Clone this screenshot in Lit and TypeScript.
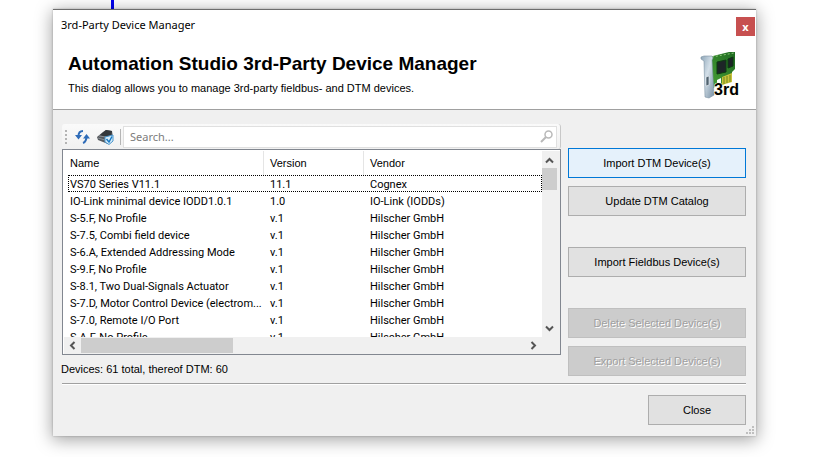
import { LitElement, html, css, svg } from "lit";
import { customElement, state } from "lit/decorators.js";

interface Device {
  name: string;
  version: string;
  vendor: string;
}

const DEVICES: Device[] = [
  { name: "VS70 Series V11.1", version: "11.1", vendor: "Cognex" },
  { name: "IO-Link minimal device IODD1.0.1", version: "1.0", vendor: "IO-Link (IODDs)" },
  { name: "S-5.F, No Profile", version: "v.1", vendor: "Hilscher GmbH" },
  { name: "S-7.5, Combi field device", version: "v.1", vendor: "Hilscher GmbH" },
  { name: "S-6.A, Extended Addressing Mode", version: "v.1", vendor: "Hilscher GmbH" },
  { name: "S-9.F, No Profile", version: "v.1", vendor: "Hilscher GmbH" },
  { name: "S-8.1, Two Dual-Signals Actuator", version: "v.1", vendor: "Hilscher GmbH" },
  { name: "S-7.D, Motor Control Device (electrom...", version: "v.1", vendor: "Hilscher GmbH" },
  { name: "S-7.0, Remote I/O Port", version: "v.1", vendor: "Hilscher GmbH" },
  { name: "S-A.F, No Profile", version: "v.1", vendor: "Hilscher GmbH" },
];

const boardIcon = html`
  <svg class="board" viewBox="0 0 46 48" width="46" height="48" role="img" aria-label="3rd">
    <defs>
      <linearGradient id="metal" x1="0" x2="1" y1="0" y2="1">
        <stop offset="0" stop-color="#8ea6b8" />
        <stop offset="0.45" stop-color="#d3dfe8" />
        <stop offset="1" stop-color="#7890a4" />
      </linearGradient>
      <linearGradient id="pcb" x1="0" x2="1" y1="1" y2="0">
        <stop offset="0" stop-color="#4aa336" />
        <stop offset="1" stop-color="#1f6a22" />
      </linearGradient>
    </defs>
    <path d="M9 5 L29 0 L35 0 L35 17 L32 20 L32 28 L20 34 L20 31 L12 37 Z" fill="url(#pcb)" />
    <path d="M12 5 L34 1" stroke="#8bc878" stroke-width="1" stroke-dasharray="2 2" />
    <path d="M17 10 L26 8 V20 L17 22 Z M28 7 L33 5 V14 L28 16 Z" fill="#1d2527" stroke="#0d3a12" />
    <path d="M22 25 L32 21 V30 L22 33 Z" fill="#c9c23c" />
    <path d="M24 25 V32 M27 24 V31 M30 23 V30" stroke="#6f8a1c" />
    <path d="M17 28 L21 26 V33 L17 34 Z" fill="#fff" />
    <path d="M1 5 L4 4 L12 4 L13 6 L12 8 L14 43 L9 46 L5 45 L4 9 L1 7 Z" fill="url(#metal)" stroke="#7c92a2" stroke-width="0.6" />
    <path d="M6 25 L9 24 V33 L6 34 Z" fill="#51636f" stroke="#eef4f8" stroke-width="0.6" />
    <text x="14" y="43" class="board-label">3rd</text>
  </svg>
`;

const chevron = (d: string) => html`
  <svg viewBox="0 0 9 9" width="9" height="9" aria-hidden="true">
    ${svg`<path d=${d} fill="none" stroke="#555" stroke-width="2" />`}
  </svg>
`;

@customElement("app-root")
export class AppRoot extends LitElement {
  @state() private focused = 0;

  static styles = css`
    :host {
      display: block;
      position: relative;
      min-height: 100vh;
      box-sizing: border-box;
      padding: 9px 57px 20px 53px;
      overflow: hidden;
      background: #fff;
      color: #000;
      font: 11px/17px "Liberation Sans", Arial, sans-serif;
    }
    * { box-sizing: border-box; }
    .wire {
      position: absolute;
      left: 111px;
      top: 0;
      width: 3px;
      height: 9px;
      background: #0000f0;
    }
    .dialog {
      position: relative;
      background: #f0f0f0;
      border-top: 1px solid #6d6d6d;
      box-shadow: 0 3px 16px 1px rgba(0, 0, 0, 0.36), 0 0 2px rgba(0, 0, 0, 0.25);
    }
    .titlebar {
      display: flex;
      justify-content: space-between;
      height: 32px;
      padding: 7px 1px 0 8px;
      background: #fff;
      font: 11px/16px "Noto Sans", "Segoe UI", sans-serif;
    }
    .close-x {
      width: 19px;
      height: 19px;
      padding: 0;
      border: 0;
      background: #c75050;
      color: #fff;
      font: bold 11px/18px "Noto Sans", sans-serif;
    }
    .header {
      display: flex;
      justify-content: space-between;
      height: 68px;
      padding: 10px 10px 0 15px;
      background: #fff;
      border-bottom: 1px solid #a0a0a0;
    }
    h1 {
      margin: 0 0 4px;
      font-size: 19px;
      line-height: 24px;
    }
    p { margin: 0; }
    .board { overflow: visible; }
    .board-label {
      font: 900 16px "Liberation Sans", Arial, sans-serif;
      fill: #000;
      stroke: #fffce0;
      stroke-width: 1px;
      paint-order: stroke;
    }
    .content {
      display: flex;
      gap: 7px;
      padding: 14px 10px 0 9px;
    }
    .main { flex: 1; min-width: 0; }
    .toolbar {
      display: flex;
      align-items: center;
      height: 25px;
      padding: 0 3px;
      border-radius: 3px;
      background: linear-gradient(#fafafa, #f1f1f1);
      border-right: 1px solid #c8c8c8;
    }
    .grip {
      width: 2px;
      height: 14px;
      margin-right: 8px;
      background: repeating-linear-gradient(#b4b4b4 0 2px, transparent 2px 4px);
    }
    .tool {
      display: flex;
      width: 22px;
      height: 20px;
      padding: 2px 0;
      border: 0;
      background: none;
    }
    .divider {
      width: 1px;
      height: 16px;
      margin: 0 2px 0 1px;
      background: #b5b5b5;
    }
    .search {
      display: flex;
      flex: 1;
      align-items: center;
      height: 22px;
      padding: 0 3px 0 6px;
      border: 1px solid #e0e0e0;
      background: #fff;
    }
    .search input {
      flex: 1;
      min-width: 0;
      padding: 0;
      border: 0;
      outline: 0;
      background: none;
      font: 11px/18px "Noto Sans", "Segoe UI", sans-serif;
    }
    .search input::placeholder { color: #7c7c7c; }
    .list {
      display: grid;
      grid-template-columns: 1fr 18px;
      grid-template-rows: 186px 17px;
      padding: 1px 0 0 1px;
      border: 1px solid #828790;
      background: #fff;
    }
    .viewport { overflow: hidden; padding-left: 4px; }
    table {
      width: 100%;
      table-layout: fixed;
      border-collapse: separate;
      border-spacing: 0;
    }
    th, td {
      padding: 0 0 0 6px;
      text-align: left;
      font-weight: normal;
      white-space: nowrap;
    }
    th { height: 24px; border-right: 1px solid #e5e5e5; }
    td {
      height: 17px;
      padding-top: 2px;
      font-family: Roboto, "Liberation Sans", sans-serif;
      line-height: 15px;
    }
    th:last-child { border-right: 0; }
    th:first-child, td:first-child { padding-left: 2px; }
    .name { width: 196px; }
    .version { width: 100px; }
    tr.focused { outline: 1px dotted #000; outline-offset: -1px; }
    .vbar, .hbar {
      display: flex;
      align-items: center;
      justify-content: space-between;
      background: #f0f0f0;
    }
    .vbar {
      flex-direction: column;
      padding: 5px 3px 4px 0;
    }
    .vbar .thumb { width: 15px; height: 22px; margin: 3px 0 auto; }
    .hbar { padding: 0 4px; }
    .hbar .thumb { width: 152px; height: 15px; margin: 0 auto 0 4px; }
    .thumb { background: #cdcdcd; }
    .status { margin-top: 6px; margin-left: -1px; }
    .actions {
      display: flex;
      flex-direction: column;
      gap: 8px;
      width: 178px;
      padding-top: 24px;
    }
    .group { margin-top: 23px; }
    .btn {
      height: 30px;
      padding: 0;
      border: 1px solid #adadad;
      background: #e1e1e1;
      color: #000;
      font: inherit;
    }
    .btn.default { border-color: #0078d7; background: #e5f1fb; }
    .btn:disabled {
      border-color: #bfbfbf;
      background: #cccccc;
      color: #a0a0a0;
      text-shadow: 1px 1px 0 #fff;
    }
    .footer {
      display: flex;
      justify-content: flex-end;
      margin: 5px 10px 0 9px;
      padding: 11px 0;
      border-top: 1px solid #a0a0a0;
      box-shadow: inset 0 1px #fff;
    }
    .footer .btn { width: 98px; }
    .resize {
      position: absolute;
      right: 2px;
      bottom: 2px;
    }
  `;

  private renderRow(device: Device, index: number) {
    return html`
      <tr
        class=${index === this.focused ? "focused" : ""}
        @click=${() => (this.focused = index)}
      >
        <td>${device.name}</td>
        <td>${device.version}</td>
        <td>${device.vendor}</td>
      </tr>
    `;
  }

  render() {
    return html`
      <div class="wire"></div>
      <main class="dialog">
        <div class="titlebar">
          <span>3rd-Party Device Manager</span>
          <button class="close-x" aria-label="Close window">x</button>
        </div>
        <header class="header">
          <div>
            <h1>Automation Studio 3rd-Party Device Manager</h1>
            <p>This dialog allows you to manage 3rd-party fieldbus- and DTM devices.</p>
          </div>
          ${boardIcon}
        </header>
        <div class="content">
          <section class="main">
            <div class="toolbar">
              <div class="grip"></div>
              <button class="tool" aria-label="Refresh">
                <svg viewBox="0 0 16 16" width="16" height="16">
                  <path d="M8 2 C5 2 3.500 3 3.500 7 M11.500 7 C11.500 11 11 13 8 14" fill="none" stroke="#2f6cb8" stroke-width="2" />
                  <path d="M0 6 H7 L3.500 10.500 Z M8 9.500 L11.500 5 L15 9.500 Z" fill="#2f6cb8" />
                </svg>
              </button>
              <button class="tool" aria-label="Verify devices">
                <svg viewBox="0 0 17 16" width="17" height="16">
                  <path d="M0 8 L6 3 L9 1 L15 2 L16 9 L11 15 L1 11 Z" fill="#55595e" />
                  <path d="M3 6 L9 1 L15 2 L14 7 L9 8 Z" fill="#34383c" />
                  <path d="M1 9 L8 11 M2 7 L9 8" stroke="#8b9095" />
                  <path d="M8 8 L16 6 V12 L12 15.500 L8 13 Z" fill="#d9edf9" stroke="#4994cb" />
                  <path d="M9.500 10 L12 13 L15 7.500" fill="none" stroke="#1678c4" stroke-width="1.500" />
                </svg>
              </button>
              <div class="divider"></div>
              <label class="search">
                <input type="text" placeholder="Search..." aria-label="Search" />
                <svg viewBox="0 0 13 13" width="13" height="13" aria-hidden="true">
                  <circle cx="8.500" cy="4.500" r="3.500" fill="none" stroke="#b9b9b9" stroke-width="1.500" />
                  <path d="M6 7 L1 12" stroke="#b9b9b9" stroke-width="2" />
                </svg>
              </label>
            </div>
            <div class="list">
              <div class="viewport">
                <table>
                  <thead>
                    <tr>
                      <th class="name">Name</th>
                      <th class="version">Version</th>
                      <th>Vendor</th>
                    </tr>
                  </thead>
                  <tbody>
                    ${DEVICES.map((d, i) => this.renderRow(d, i))}
                  </tbody>
                </table>
              </div>
              <div class="vbar">
                ${chevron("M1 6.500 L4.500 3 L8 6.500")}
                <div class="thumb"></div>
                ${chevron("M1 2.500 L4.500 6 L8 2.500")}
              </div>
              <div class="hbar">
                ${chevron("M6.500 1 L3 4.500 L6.500 8")}
                <div class="thumb"></div>
                ${chevron("M2.500 1 L6 4.500 L2.500 8")}
              </div>
              <div class="hbar"></div>
            </div>
            <div class="status">Devices: 61 total, thereof DTM: 60</div>
          </section>
          <section class="actions">
            <button class="btn default">Import DTM Device(s)</button>
            <button class="btn">Update DTM Catalog</button>
            <button class="btn group">Import Fieldbus Device(s)</button>
            <button class="btn group" disabled>Delete Selected Device(s)</button>
            <button class="btn" disabled>Export Selected Device(s)</button>
          </section>
        </div>
        <footer class="footer">
          <button class="btn">Close</button>
        </footer>
        <svg class="resize" viewBox="0 0 8 8" width="8" height="8" aria-hidden="true">
          <path d="M6 0h2v2h-2z M3 3h2v2h-2z M6 3h2v2h-2z M0 6h2v2h-2z M3 6h2v2h-2z M6 6h2v2h-2z" fill="#bfbfbf" />
        </svg>
      </main>
    `;
  }
}
